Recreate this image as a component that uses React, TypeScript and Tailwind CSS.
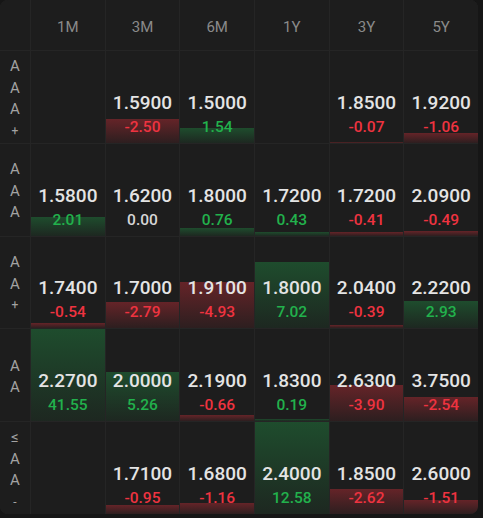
type Cell = [number, number] | null

const COLS = ["1M", "3M", "6M", "1Y", "3Y", "5Y"]

const ROWS: { label: string[]; cells: Cell[] }[] = [
  { label: ["A", "A", "A", "+"], cells: [null, [1.59, -2.5], [1.5, 1.54], null, [1.85, -0.07], [1.92, -1.06]] },
  { label: ["A", "A", "A"], cells: [[1.58, 2.01], [1.62, 0], [1.8, 0.76], [1.72, 0.43], [1.72, -0.41], [2.09, -0.49]] },
  { label: ["A", "A", "+"], cells: [[1.74, -0.54], [1.7, -2.79], [1.91, -4.93], [1.8, 7.02], [2.04, -0.39], [2.22, 2.93]] },
  { label: ["A", "A"], cells: [[2.27, 41.55], [2.0, 5.26], [2.19, -0.66], [1.83, 0.19], [2.63, -3.9], [3.75, -2.54]] },
  { label: ["≤", "A", "A", "-"], cells: [null, [1.71, -0.95], [1.68, -1.16], [2.4, 12.58], [1.85, -2.62], [2.6, -1.51]] },
]

function RateCell({ cell }: { cell: Cell }) {
  if (!cell) return <div className="bg-[#1d1d1d]" />
  const [value, change] = cell
  const up = change > 0
  const down = change < 0
  // bar height grows with the size of the move, capped at the cell
  const barHeight = Math.abs(change) * 9.4
  return (
    <div className="relative flex flex-col items-center justify-end bg-[#1d1d1d] pb-[5px]">
      {change !== 0 && (
        <div
          className={
            up
              ? "absolute inset-x-0 bottom-0 max-h-full bg-gradient-to-b from-[rgba(33,176,79,0.32)] to-[rgba(33,176,79,0.07)]"
              : "absolute inset-x-0 bottom-0 max-h-full bg-gradient-to-b from-[rgba(229,48,60,0.36)] to-[rgba(229,48,60,0.08)]"
          }
          style={{ height: barHeight }}
        />
      )}
      <span className="relative text-[19px] leading-[26px] font-medium text-[#e4e4e4]">{value.toFixed(4)}</span>
      <span
        className={
          "relative text-[15.5px] leading-[22px] font-medium " +
          (up ? "text-[#22b14c]" : down ? "text-[#ee3340]" : "text-[#d6d6d6]")
        }
      >
        {change.toFixed(2)}
      </span>
    </div>
  )
}

export default function App() {
  return (
    <div className="w-[483px] h-[518px] bg-[#161616] font-['Roboto','Noto_Sans',sans-serif]">
      <div className="grid w-[478px] h-[514px] grid-cols-[30px_repeat(6,1fr)] grid-rows-[50px_repeat(5,1fr)] gap-px overflow-hidden rounded-lg bg-[#252525]">
        {/* header row */}
        <div className="bg-[#1d1d1d]" />
        {COLS.map((c) => (
          <div key={c} className="flex items-center justify-center bg-[#1d1d1d] pt-1 text-[15px] text-[#8a8a8a]">
            {c}
          </div>
        ))}

        {ROWS.map((row, i) => (
          <div key={i} className="contents">
            <div className="flex flex-col items-center justify-center bg-[#1d1d1d] pt-1 text-[#a3a3a3]">
              {row.label.map((ch, j) => (
                <span
                  key={j}
                  className={
                    ch === "+" || ch === "-"
                      ? "text-[12px] leading-[21px]"
                      : "text-[15px] leading-[21.5px]"
                  }
                >
                  {ch}
                </span>
              ))}
            </div>
            {row.cells.map((cell, j) => (
              <RateCell key={j} cell={cell} />
            ))}
          </div>
        ))}
      </div>
    </div>
  )
}
